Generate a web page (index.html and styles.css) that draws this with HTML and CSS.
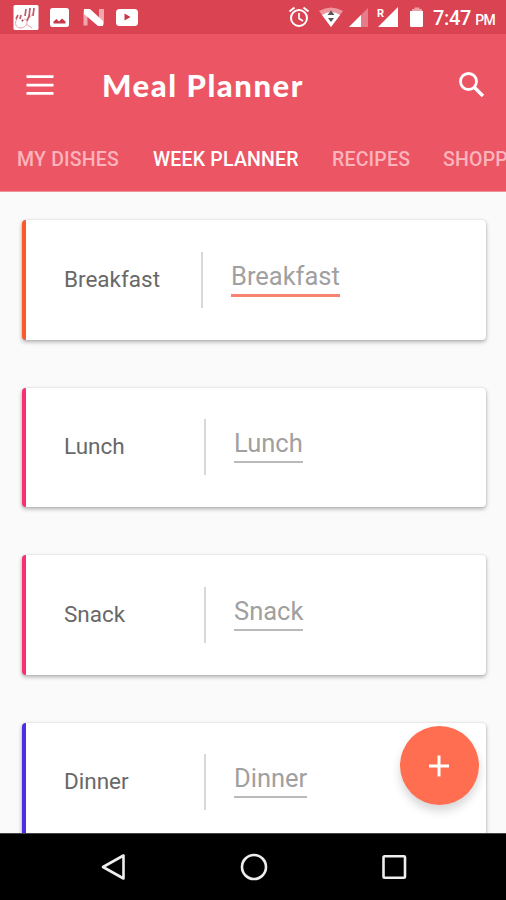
FILE: index.html
```html
<!DOCTYPE html>
<html lang="en">
<head>
<meta charset="utf-8">
<title>Meal Planner</title>
<link rel="stylesheet" href="styles.css">
</head>
<body>
<div class="phone">
  <div class="status">
    <svg class="notifications" width="150" height="34" viewBox="0 0 150 34">
      <rect x="13.5" y="5" width="25" height="25" rx="1.5" fill="#fff"/>
      <g fill="none" stroke="#e3a5ae" stroke-width="1">
        <path d="M17 19c-3 4-1 9 3 9 5 0 8-4 7-8M24 19c4 2 6-2 9-6M26 24l6 4"/>
      </g>
      <path d="M18 15l-2 4M21 15l-1 4M26 9l-1 7M30 8l-1 9M34 8l-1 8M29 16l-2 5" stroke="#c25766" stroke-width="1.700" fill="none"/>
      <circle cx="22.500" cy="20.500" r="1" fill="#8d3340"/>
      <rect x="50" y="8" width="19" height="19" rx="2.500" fill="#fff"/>
      <path d="M53.500 23.500v-2l3-2.500 2.500 2.500 3-3 3.500 3v2z" fill="#c8374b"/>
      <path d="M83.500 10.500l4-1v16h-4zM99 9h5v16l-5-3z" fill="#f4a6af"/>
      <path d="M84 9h6l13 12v5h-5L84 14z" fill="#fff"/>
      <rect x="116" y="9" width="22" height="17" rx="3.500" fill="#fff"/>
      <path d="M124.500 13.500v7l6-3.500z" fill="#c8374b"/>
    </svg>
    <div class="status-right">
      <svg width="140" height="34" viewBox="285 0 140 34">
        <g fill="none" stroke="#fff" stroke-width="2">
          <circle cx="299" cy="18" r="8"/>
          <path d="M299 13v5.500l4 2.500" stroke-width="1.700"/>
          <path d="M289.500 11.500l5-4M308.500 11.500l-5-4"/>
        </g>
        <path d="M319 11q12-7 24 0l-12 16z" fill="#ed96a0"/>
        <path d="M322 15q9-6 18 0L331 27z" fill="#fff"/>
        <path d="M327.500 15l3.500-4.500 3.500 4.500zM328 18h6l-3 4z" fill="#555"/>
        <path d="M368 8v19h-19z" fill="#e77c89"/>
        <path d="M361 15v12h-12z" fill="#fff"/>
        <path d="M398 7v20h-20z" fill="#fff"/>
        <path d="M412 9h2.500V7.500h5V9h2.500v3h-10z" fill="#eea0a9"/>
        <path d="M410 11h13v14.500q0 1.500-1.500 1.500h-10q-1.500 0-1.500-1.500z" fill="#fff"/>
        <text class="roaming" x="377" y="17">R</text>
      </svg>
      <span class="clock">7:47</span><span class="period">PM</span>
    </div>
  </div>
  <header class="appbar">
    <div class="toolbar">
      <svg class="menu" width="28" height="20" viewBox="0 0 28 20"><path d="M.5 1.700h27M.5 10.200h27M.5 18.300h27" stroke="#fff" stroke-width="2.800"/></svg>
      <h1>Meal Planner</h1>
      <svg class="search" width="28" height="28" viewBox="0 0 28 28" fill="none" stroke="#fff"><circle cx="10.500" cy="10.500" r="8" stroke-width="2.800"/><path d="M16.500 16.500l8.500 8.500" stroke-width="3.400"/></svg>
    </div>
    <nav class="tabs">
      <span class="tab dishes">MY DISHES</span>
      <span class="tab active">WEEK PLANNER</span>
      <span class="tab recipes">RECIPES</span>
      <span class="tab shopping">SHOPPING</span>
    </nav>
  </header>
  <main class="meals">
    <section class="meal breakfast"><span class="label">Breakfast</span><span class="field">Breakfast</span></section>
    <section class="meal lunch"><span class="label">Lunch</span><span class="field">Lunch</span></section>
    <section class="meal snack"><span class="label">Snack</span><span class="field">Snack</span></section>
    <section class="meal dinner"><span class="label">Dinner</span><span class="field">Dinner</span></section>
    <div class="fab"><svg width="20" height="22" viewBox="0 0 20 22"><path d="M0 11h20M10 .5v21" stroke="#fff" stroke-width="3"/></svg></div>
  </main>
  <footer class="navbar">
    <svg width="26" height="28" viewBox="0 0 26 28"><path d="M3 14L23.500 2.500v23z"/></svg>
    <svg width="28" height="28" viewBox="0 0 28 28"><circle cx="14" cy="14" r="12"/></svg>
    <svg width="26" height="28" viewBox="0 0 26 28"><rect x="2.500" y="3.300" width="21.500" height="21.500" rx="1"/></svg>
  </footer>
</div>
</body>
</html>
```
FILE: styles.css
```css
* { box-sizing: border-box; }
body { margin: 0; font-family: Roboto, sans-serif; }
svg { display: block; flex: none; }
.phone { width: 506px; height: 900px; display: flex; flex-direction: column; overflow: hidden; background: #fafafa; }
.status { height: 34px; flex: none; display: flex; justify-content: space-between; background: #d94352; color: #fff; }
.status-right { display: flex; align-items: baseline; width: 221px; line-height: 36px; }
.status-right svg { align-self: flex-start; }
.roaming { font: 700 11px Roboto, sans-serif; fill: #fff; }
.clock { margin-left: 8px; font-size: 20px; font-weight: 500; letter-spacing: -.3px; }
.period { margin-left: 4px; font-size: 14px; font-weight: 500; letter-spacing: -.6px; }
.appbar { height: 158px; flex: none; background: #ec5564; color: #fff; border-bottom: 1px solid #f0929a; }
.toolbar { height: 101px; display: flex; align-items: center; padding: 0 20px 0 26px; }
h1 { margin: 0 auto 0 48px; font: 900 31px/40px Lato, sans-serif; letter-spacing: 1.55px; white-space: nowrap; }
.tabs { display: flex; height: 50px; padding-left: 17px; line-height: 50px; overflow: hidden; }
.tab { flex: none; font-size: 19.500px; font-weight: 500; letter-spacing: .2px; color: #fbb4bb; white-space: nowrap; }
.dishes { width: 136px; }
.active { width: 179px; color: #fff; }
.recipes { width: 111px; }
.meals { position: relative; flex: 1; min-height: 0; overflow: hidden; display: flex; flex-direction: column; gap: 48px; padding: 28px 20px 0 21.500px; }
.meal { flex: none; height: 119.500px; display: flex; align-items: flex-start; background: #fff; border-left: 4px solid #fa2f70; border-radius: 4px; box-shadow: 0 2px 4px rgba(0,0,0,.3), 0 0 2px rgba(0,0,0,.12); }
.breakfast { border-left-color: #fb5a2b; }
.dinner { border-left-color: #4a2fe5; }
.label { width: 141.500px; margin-left: 38.500px; margin-top: 43.500px; color: #686868; font-size: 22.500px; line-height: 30px; }
.field { position: relative; margin-top: 38.500px; margin-left: 28.500px; padding-bottom: 1px; border-bottom: 2px solid #bababa; color: #a0a0a0; font-size: 25.500px; line-height: 34px; }
.field::before { content: ""; position: absolute; left: -30px; top: -7px; width: 2px; height: 56px; background: #d8d8d8; }
.breakfast .label { width: 138.500px; }
.breakfast .field { margin-top: 39px; border-bottom: 3px solid #f98372; }
.fab { position: absolute; left: 399.500px; top: 534px; width: 79px; height: 79px; border-radius: 50%; background: #ff6e50; display: flex; align-items: center; justify-content: center; box-shadow: 0 6px 10px rgba(0,0,0,.16); }
.navbar { height: 67px; flex: none; display: flex; justify-content: space-between; align-items: center; padding: 0 99px 0 100px; background: #000; border-top: 1px solid #444; }
.navbar svg { fill: none; stroke: #eee; stroke-width: 2.600; stroke-linejoin: round; }
```
